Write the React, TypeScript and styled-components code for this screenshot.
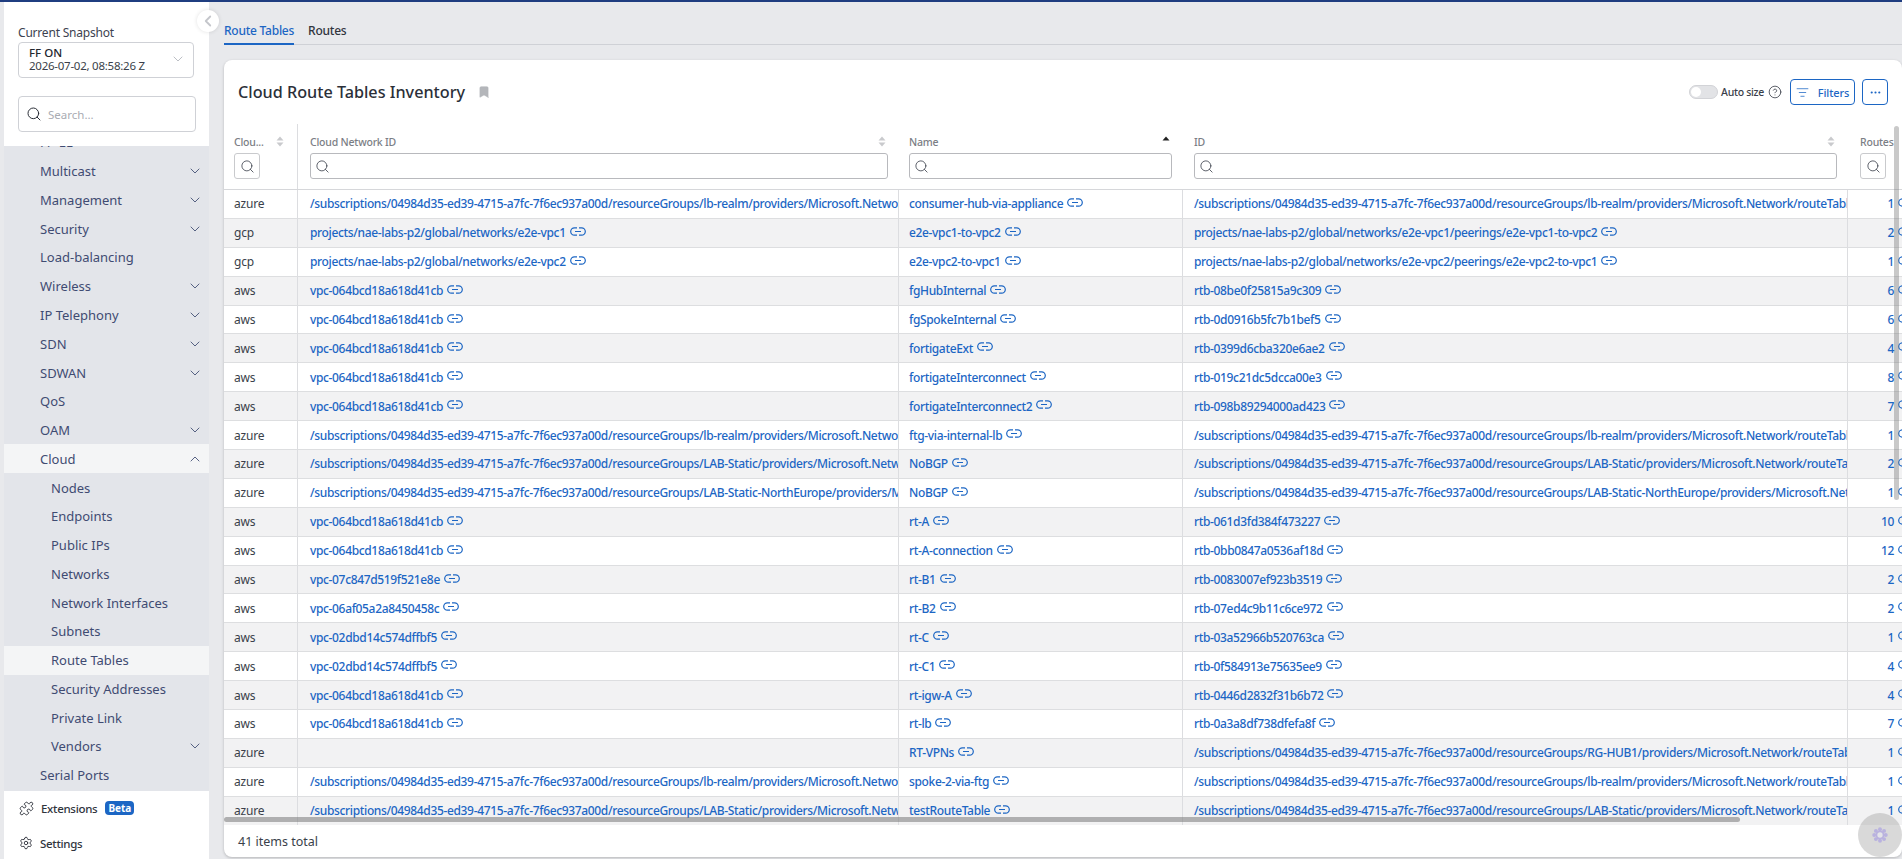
import React from 'react';
import styled, { createGlobalStyle } from 'styled-components';
import {
  Bookmark,
  ChevronDown,
  ChevronLeft,
  ChevronUp,
  CircleHelp,
  Ellipsis,
  ListFilter,
  Puzzle,
  Search,
  Settings,
} from 'lucide-react';

const FONT = '"Noto Sans", "Open Sans", Arial, sans-serif';
const LINK = '#1c66c4';
const COLUMNS = '74px 601px 284px 665px 54px';

const GlobalStyle = createGlobalStyle`
  html, body {
    margin: 0;
    height: 100%;
    overflow: hidden;
    background: #e8e9ec;
    font-family: ${FONT};
  }
  * { box-sizing: border-box; }
`;

const Page = styled.div`
  height: 859px;
  width: 1902px;
  display: flex;
  flex-direction: column;
  overflow: hidden;
`;

const TopBar = styled.div`
  height: 2px;
  flex: none;
  background: #1f3d80;
`;

const Body = styled.div`
  flex: 1;
  display: flex;
  min-height: 0;
  padding-left: 4px;
`;

const Sidebar = styled.aside`
  position: relative;
  width: 205px;
  flex: none;
  display: flex;
  flex-direction: column;
  background: #fff;
`;

const CollapseButton = styled.div`
  position: absolute;
  top: 8px;
  right: -10px;
  width: 22px;
  height: 22px;
  border-radius: 50%;
  background: #fff;
  display: flex;
  align-items: center;
  justify-content: center;
  color: #c4c6cb;
  box-shadow: 0 0 4px rgba(0, 0, 0, 0.12);
  z-index: 3;
`;

const SidebarHead = styled.div`
  height: 144px;
  flex: none;
  padding: 23px 0 0 14px;
`;

const SnapshotLabel = styled.div`
  font-size: 12px;
  letter-spacing: -0.2px;
  line-height: 16px;
  color: #3c4250;
`;

const SnapshotSelect = styled.div`
  width: 176px;
  height: 36px;
  margin-top: 1px;
  padding: 3px 0 0 10px;
  position: relative;
  border: 1px solid #cfd1d6;
  border-radius: 4px;
  color: #3a3f4a;
  font-size: 11.5px;
  letter-spacing: -0.25px;
  line-height: 13px;
`;

const SnapshotName = styled.div`
  font-weight: 500;
  letter-spacing: 0;
  color: #23272f;
`;

const SelectChevron = styled.span`
  position: absolute;
  right: 7px;
  top: 8px;
  color: #bcbfc5;
  display: flex;
`;

const SearchBox = styled.div`
  width: 178px;
  height: 36px;
  margin-top: 18px;
  padding-left: 7px;
  display: flex;
  align-items: center;
  gap: 6px;
  border: 1px solid #cfd1d6;
  border-radius: 4px;
  color: #2b2f38;
  font-size: 11.5px;
`;

const Placeholder = styled.span`
  color: #a9acb3;
`;

const Nav = styled.nav`
  height: 645px;
  flex: none;
  overflow: hidden;
  background: #e3e5ea;
`;

const NavList = styled.div`
  margin-top: -18px;
`;

const NavItem = styled.div<{ $sub?: boolean; $active?: boolean }>`
  height: 28.78px;
  display: flex;
  align-items: center;
  justify-content: space-between;
  padding: 0 6px 0 ${(p) => (p.$sub ? 47 : 36)}px;
  font-size: 13px;
  color: #3f4b72;
  background: ${(p) => (p.$active ? '#f4f5f6' : 'transparent')};
`;

const NavChevron = styled.span`
  display: flex;
  color: #3f4b72;
`;

const SidebarFoot = styled.div`
  flex: 1;
  display: flex;
  flex-direction: column;
  gap: 1px;
  padding: 0 0 0 15px;
  color: #30343d;
  font-size: 11.5px;
  letter-spacing: -0.3px;
  font-weight: 500;
`;

const FootItem = styled.div`
  height: 34px;
  display: flex;
  align-items: center;
  gap: 7px;
`;

const BetaBadge = styled.span`
  margin-left: 1px;
  padding: 0 3px;
  height: 14px;
  line-height: 14px;
  border-radius: 4px;
  background: ${LINK};
  color: #fff;
  font-size: 10px;
  letter-spacing: 0;
  font-weight: 700;
`;

const Main = styled.main`
  flex: 1;
  min-width: 0;
  padding-left: 15px;
  display: flex;
  flex-direction: column;
`;

const Tabs = styled.div`
  height: 43px;
  flex: none;
  display: flex;
  gap: 14px;
  border-bottom: 1px solid #cfd1d6;
`;

const Tab = styled.div<{ $active?: boolean }>`
  height: 43px;
  padding-top: 20px;
  line-height: 18px;
  font-size: 12px;
  letter-spacing: -0.25px;
  font-weight: 500;
  color: ${(p) => (p.$active ? LINK : '#30343d')};
  border-bottom: 2px solid ${(p) => (p.$active ? LINK : 'transparent')};
`;

const Card = styled.section`
  position: relative;
  height: 797px;
  margin-top: 15px;
  flex: none;
  display: flex;
  flex-direction: column;
  background: #fff;
  border-radius: 8px;
  box-shadow: 0 1px 3px rgba(0, 0, 0, 0.22);
  overflow: hidden;
`;

const CardHead = styled.div`
  height: 64px;
  flex: none;
  display: flex;
  align-items: center;
  padding: 0 14px;
`;

const CardTitle = styled.h1`
  margin: 0;
  font-size: 16.2px;
  font-weight: 500;
  color: #2b2f38;
`;

const TitleMark = styled.span`
  display: flex;
  margin-left: 12px;
  color: #b4b6ba;
`;

const Toolbar = styled.div`
  margin-left: auto;
  display: flex;
  align-items: center;
  color: #3a3f4a;
  font-size: 10.5px;
  letter-spacing: -0.3px;
  font-weight: 500;
`;

const Toggle = styled.span`
  width: 29px;
  height: 14px;
  padding: 1px;
  margin-right: 3px;
  border-radius: 7px;
  background: #e2e3e6;
  border: 1px solid #d2d3d7;
  display: flex;
`;

const ToggleKnob = styled.span`
  width: 10px;
  height: 10px;
  border-radius: 50%;
  background: #fff;
`;

const HelpIcon = styled.span`
  display: flex;
  margin: 0 8px 0 4px;
`;

const OutlineButton = styled.div<{ $wide?: boolean }>`
  height: 26px;
  width: ${(p) => (p.$wide ? 65 : 26)}px;
  margin-right: ${(p) => (p.$wide ? 7 : 0)}px;
  display: flex;
  align-items: center;
  justify-content: center;
  gap: 9px;
  border: 1px solid ${LINK};
  border-radius: 4px;
  color: ${LINK};
  font-size: 11px;
  letter-spacing: -0.1px;
  font-weight: 500;
`;

const TableWrap = styled.div`
  position: relative;
  flex: 1;
  min-height: 0;
  overflow: hidden;
`;

const HeaderRow = styled.div`
  height: 66px;
  display: grid;
  grid-template-columns: ${COLUMNS};
  border-bottom: 1px solid #d6d7da;
`;

const HeaderCell = styled.div<{ $pad: number; $endPad?: number; $divided?: boolean }>`
  position: relative;
  padding: 10px ${(p) => p.$endPad ?? 11}px 0 ${(p) => p.$pad}px;
  border-right: ${(p) => (p.$divided ? '1px solid #dcdde0' : 'none')};
`;

const HeaderLabel = styled.div`
  height: 16px;
  line-height: 16px;
  font-size: 10.5px;
  letter-spacing: -0.2px;
  font-weight: 500;
  color: #7b7e85;
  white-space: nowrap;
`;

const SortIcon = styled.span`
  position: absolute;
  top: 12px;
  right: 13px;
  display: flex;
`;

const FilterInput = styled.div<{ $square?: boolean }>`
  height: 26px;
  width: ${(p) => (p.$square ? '26px' : 'auto')};
  margin-top: 3px;
  padding-left: ${(p) => (p.$square ? 0 : 4)}px;
  display: flex;
  align-items: center;
  justify-content: ${(p) => (p.$square ? 'center' : 'flex-start')};
  border: 1px solid ${(p) => (p.$square ? '#c9cacd' : '#b8b9bd')};
  border-radius: 3px;
  color: #3a3f4a;
  background: #fff;
`;

const DataRow = styled.div<{ $striped: boolean }>`
  height: 28.9px;
  display: grid;
  grid-template-columns: ${COLUMNS};
  background: ${(p) => (p.$striped ? '#f2f2f3' : '#fff')};
  border-bottom: 1px solid #dddee0;
`;

const Cell = styled.div<{ $pad: number; $last?: boolean }>`
  display: flex;
  align-items: center;
  gap: 4px;
  padding-left: ${(p) => p.$pad}px;
  overflow: hidden;
  white-space: nowrap;
  font-size: 12px;
  letter-spacing: -0.2px;
  color: #3a3f4a;
  border-right: ${(p) => (p.$last ? 'none' : '1px solid #dcdde0')};
`;

const LinkText = styled.span`
  color: ${LINK};
  font-weight: 500;
  letter-spacing: -0.35px;
  flex: none;
`;

const CountText = styled(LinkText)`
  width: 34px;
  text-align: right;
`;

const LinkGlyph = styled.svg`
  width: 16px;
  height: 9px;
  flex: none;
  margin-top: -3px;
  fill: none;
  stroke: ${LINK};
  stroke-width: 1.2;
`;

const HScroll = styled.div`
  position: absolute;
  left: 0;
  bottom: 3px;
  width: 1516px;
  height: 5px;
  border-radius: 3px;
  background: rgba(120, 120, 120, 0.55);
`;

const VScroll = styled.div`
  position: absolute;
  top: 2px;
  right: 3px;
  height: 374px;
  width: 5px;
  border-radius: 3px;
  background: rgba(120, 120, 120, 0.4);
`;

const CardFoot = styled.div`
  height: 32px;
  flex: none;
  display: flex;
  align-items: center;
  padding-left: 14px;
  font-size: 12.5px;
  color: #3a3f4a;
`;

const BusyBadge = styled.div`
  position: absolute;
  right: 0;
  bottom: 0;
  width: 44px;
  height: 44px;
  border-radius: 50%;
  background: rgba(130, 130, 130, 0.3);
  display: flex;
  align-items: center;
  justify-content: center;
  z-index: 2;
`;

const BusyGlyph = styled.svg`
  width: 16px;
  height: 16px;
  filter: blur(0.7px);
`;

const LinkIcon = () => (
  <LinkGlyph viewBox="0 0 16 9">
    <path d="M7 .8H4.4a3.7 3.7 0 0 0 0 7.4H7M9 .8h2.6a3.7 3.7 0 0 1 0 7.4H9M5 4.5h6" />
  </LinkGlyph>
);

const SortArrows = ({ active }: { active?: boolean }) => (
  <svg width="8" height="11" viewBox="0 0 8 11">
    <path d="M4 0.5L7.5 4.5H0.5Z" fill={active ? '#222' : '#c9cacd'} />
    {!active && <path d="M4 10.5L0.5 6.5H7.5Z" fill="#c9cacd" />}
  </svg>
);

const NAV: { label: string; sub?: boolean; chevron?: 'down' | 'up'; active?: boolean }[] = [
  { label: 'FP-EE' },
  { label: 'Multicast', chevron: 'down' },
  { label: 'Management', chevron: 'down' },
  { label: 'Security', chevron: 'down' },
  { label: 'Load-balancing' },
  { label: 'Wireless', chevron: 'down' },
  { label: 'IP Telephony', chevron: 'down' },
  { label: 'SDN', chevron: 'down' },
  { label: 'SDWAN', chevron: 'down' },
  { label: 'QoS' },
  { label: 'OAM', chevron: 'down' },
  { label: 'Cloud', chevron: 'up', active: true },
  { label: 'Nodes', sub: true },
  { label: 'Endpoints', sub: true },
  { label: 'Public IPs', sub: true },
  { label: 'Networks', sub: true },
  { label: 'Network Interfaces', sub: true },
  { label: 'Subnets', sub: true },
  { label: 'Route Tables', sub: true, active: true },
  { label: 'Security Addresses', sub: true },
  { label: 'Private Link', sub: true },
  { label: 'Vendors', sub: true, chevron: 'down' },
  { label: 'Serial Ports' },
];

const SUB = '/subscriptions/04984d35-ed39-4715-a7fc-7f6ec937a00d/resourceGroups/';
const vnet = (rg: string) => `${SUB}${rg}/providers/Microsoft.Network/virtualNetworks/${rg}-vnet`;
const rtb = (rg: string) => `${SUB}${rg}/providers/Microsoft.Network/routeTables/${rg}-routes`;
const VPC = 'vpc-064bcd18a618d41cb';
const GCP = 'projects/nae-labs-p2/global/networks/';

// cloud, network, name, id, routes
const ROWS: [string, string, string, string, string][] = [
  ['azure', vnet('lb-realm'), 'consumer-hub-via-appliance', rtb('lb-realm'), '1'],
  ['gcp', `${GCP}e2e-vpc1`, 'e2e-vpc1-to-vpc2', `${GCP}e2e-vpc1/peerings/e2e-vpc1-to-vpc2`, '2'],
  ['gcp', `${GCP}e2e-vpc2`, 'e2e-vpc2-to-vpc1', `${GCP}e2e-vpc2/peerings/e2e-vpc2-to-vpc1`, '1'],
  ['aws', VPC, 'fgHubInternal', 'rtb-08be0f25815a9c309', '6'],
  ['aws', VPC, 'fgSpokeInternal', 'rtb-0d0916b5fc7b1bef5', '6'],
  ['aws', VPC, 'fortigateExt', 'rtb-0399d6cba320e6ae2', '4'],
  ['aws', VPC, 'fortigateInterconnect', 'rtb-019c21dc5dcca00e3', '8'],
  ['aws', VPC, 'fortigateInterconnect2', 'rtb-098b89294000ad423', '7'],
  ['azure', vnet('lb-realm'), 'ftg-via-internal-lb', rtb('lb-realm'), '1'],
  ['azure', vnet('LAB-Static'), 'NoBGP', rtb('LAB-Static'), '2'],
  ['azure', vnet('LAB-Static-NorthEurope'), 'NoBGP', rtb('LAB-Static-NorthEurope'), '1'],
  ['aws', VPC, 'rt-A', 'rtb-061d3fd384f473227', '10'],
  ['aws', VPC, 'rt-A-connection', 'rtb-0bb0847a0536af18d', '12'],
  ['aws', 'vpc-07c847d519f521e8e', 'rt-B1', 'rtb-0083007ef923b3519', '2'],
  ['aws', 'vpc-06af05a2a8450458c', 'rt-B2', 'rtb-07ed4c9b11c6ce972', '2'],
  ['aws', 'vpc-02dbd14c574dffbf5', 'rt-C', 'rtb-03a52966b520763ca', '1'],
  ['aws', 'vpc-02dbd14c574dffbf5', 'rt-C1', 'rtb-0f584913e75635ee9', '4'],
  ['aws', VPC, 'rt-igw-A', 'rtb-0446d2832f31b6b72', '4'],
  ['aws', VPC, 'rt-lb', 'rtb-0a3a8df738dfefa8f', '7'],
  ['azure', '', 'RT-VPNs', rtb('RG-HUB1'), '1'],
  ['azure', vnet('lb-realm'), 'spoke-2-via-ftg', rtb('lb-realm'), '1'],
  ['azure', vnet('LAB-Static'), 'testRouteTable', rtb('LAB-Static'), '1'],
];

const SearchGlyph = () => <Search size={15} strokeWidth={1.3} />;

const LinkCell = ({ value, pad }: { value: string; pad: number }) => (
  <Cell $pad={pad}>
    {value && <LinkText>{value}</LinkText>}
    {value && <LinkIcon />}
  </Cell>
);

export default function App() {
  return (
    <Page>
      <GlobalStyle />
      <TopBar />
      <Body>
        <Sidebar>
          <CollapseButton>
            <ChevronLeft size={18} strokeWidth={2.4} />
          </CollapseButton>
          <SidebarHead>
            <SnapshotLabel>Current Snapshot</SnapshotLabel>
            <SnapshotSelect>
              <SnapshotName>FF ON</SnapshotName>
              2026-07-02, 08:58:26 Z
              <SelectChevron>
                <ChevronDown size={16} strokeWidth={1.5} />
              </SelectChevron>
            </SnapshotSelect>
            <SearchBox>
              <Search size={16} strokeWidth={1.5} />
              <Placeholder>Search...</Placeholder>
            </SearchBox>
          </SidebarHead>
          <Nav>
            <NavList>
              {NAV.map((item) => (
                <NavItem key={item.label} $sub={item.sub} $active={item.active}>
                  {item.label}
                  {item.chevron && (
                    <NavChevron>
                      {item.chevron === 'down' ? (
                        <ChevronDown size={16} strokeWidth={1.3} />
                      ) : (
                        <ChevronUp size={16} strokeWidth={1.3} />
                      )}
                    </NavChevron>
                  )}
                </NavItem>
              ))}
            </NavList>
          </Nav>
          <SidebarFoot>
            <FootItem>
              <Puzzle size={15} strokeWidth={1.6} />
              Extensions
              <BetaBadge>Beta</BetaBadge>
            </FootItem>
            <FootItem>
              <Settings size={14} strokeWidth={1.6} />
              Settings
            </FootItem>
          </SidebarFoot>
        </Sidebar>
        <Main>
          <Tabs>
            <Tab $active>Route Tables</Tab>
            <Tab>Routes</Tab>
          </Tabs>
          <Card>
            <CardHead>
              <CardTitle>Cloud Route Tables Inventory</CardTitle>
              <TitleMark>
                <Bookmark size={14} fill="currentColor" strokeWidth={1} />
              </TitleMark>
              <Toolbar>
                <Toggle>
                  <ToggleKnob />
                </Toggle>
                Auto size
                <HelpIcon>
                  <CircleHelp size={14} strokeWidth={1.4} />
                </HelpIcon>
                <OutlineButton $wide>
                  <ListFilter size={13} strokeWidth={1.4} />
                  Filters
                </OutlineButton>
                <OutlineButton>
                  <Ellipsis size={13} strokeWidth={2} />
                </OutlineButton>
              </Toolbar>
            </CardHead>
            <TableWrap>
              <HeaderRow>
                <HeaderCell $pad={10} $divided>
                  <HeaderLabel>Clou...</HeaderLabel>
                  <SortIcon>
                    <SortArrows />
                  </SortIcon>
                  <FilterInput $square>
                    <SearchGlyph />
                  </FilterInput>
                </HeaderCell>
                <HeaderCell $pad={12}>
                  <HeaderLabel>Cloud Network ID</HeaderLabel>
                  <SortIcon>
                    <SortArrows />
                  </SortIcon>
                  <FilterInput>
                    <SearchGlyph />
                  </FilterInput>
                </HeaderCell>
                <HeaderCell $pad={10}>
                  <HeaderLabel>Name</HeaderLabel>
                  <SortIcon>
                    <SortArrows active />
                  </SortIcon>
                  <FilterInput>
                    <SearchGlyph />
                  </FilterInput>
                </HeaderCell>
                <HeaderCell $pad={11}>
                  <HeaderLabel>ID</HeaderLabel>
                  <SortIcon>
                    <SortArrows />
                  </SortIcon>
                  <FilterInput>
                    <SearchGlyph />
                  </FilterInput>
                </HeaderCell>
                <HeaderCell $pad={12} $endPad={0}>
                  <HeaderLabel>Routes</HeaderLabel>
                  <FilterInput $square>
                    <SearchGlyph />
                  </FilterInput>
                </HeaderCell>
              </HeaderRow>
              {ROWS.map(([cloud, network, name, id, routes], i) => (
                <DataRow key={`${name}-${i}`} $striped={i % 2 === 1}>
                  <Cell $pad={10}>{cloud}</Cell>
                  <LinkCell value={network} pad={12} />
                  <LinkCell value={name} pad={10} />
                  <LinkCell value={id} pad={11} />
                  <Cell $pad={12} $last>
                    <CountText>{routes}</CountText>
                    <LinkIcon />
                  </Cell>
                </DataRow>
              ))}
              <HScroll />
              <VScroll />
            </TableWrap>
            <CardFoot>41 items total</CardFoot>
            <BusyBadge>
              <BusyGlyph viewBox="0 0 18 18">
                <g fill="#b9b2df">
                  <circle cx="9" cy="2.5" r="2.2" />
                  <circle cx="13.6" cy="4.4" r="2.2" />
                  <circle cx="15.5" cy="9" r="2.2" />
                  <circle cx="13.6" cy="13.6" r="2.2" />
                  <circle cx="9" cy="15.5" r="2.2" />
                  <circle cx="4.4" cy="13.6" r="2.2" />
                  <circle cx="2.5" cy="9" r="2.2" />
                  <circle cx="4.4" cy="4.4" r="2.2" />
                  <circle cx="9" cy="9" r="5" />
                </g>
                <circle cx="9" cy="9" r="3" fill="#e4e4e8" />
              </BusyGlyph>
            </BusyBadge>
          </Card>
        </Main>
      </Body>
    </Page>
  );
}
